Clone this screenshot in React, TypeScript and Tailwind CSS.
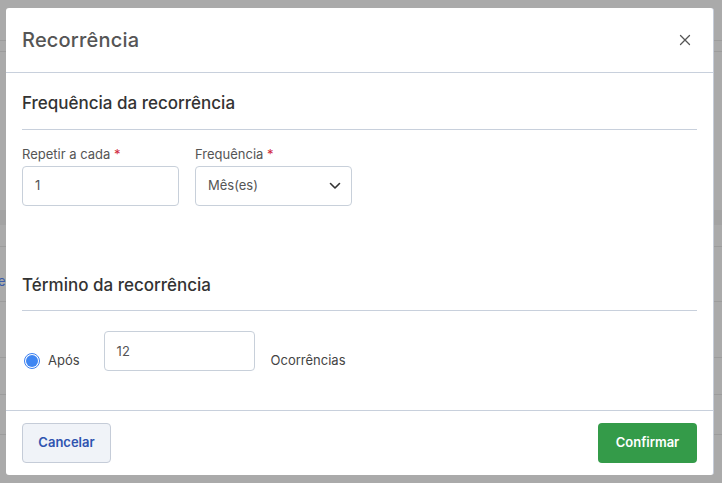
import React from "react";

function CloseIcon() {
  return (
    <svg width="12" height="12" viewBox="0 0 12 12" fill="none">
      <path d="M1.5 1.5L10.5 10.5M10.5 1.5L1.5 10.5" stroke="#555" strokeWidth="1.3" strokeLinecap="round" />
    </svg>
  );
}

function Chevron() {
  return (
    <svg width="12" height="8" viewBox="0 0 12 8" fill="none">
      <path d="M1.5 1.5L6 6L10.5 1.5" stroke="#333" strokeWidth="1.6" strokeLinecap="round" strokeLinejoin="round" />
    </svg>
  );
}

export default function App() {
  const font = { fontFamily: 'Inter, "Noto Sans", sans-serif' };
  return (
    <div className="relative w-[722px] h-[483px] overflow-hidden bg-[#aaaaaa]" style={font}>
      {/* background page (dimmed) */}
      <div className="flex flex-col">
        <div className="h-[41px] border-b border-[#9c9c9c]" />
        <div className="h-[11px] border-b border-[#9c9c9c]" />
        <div className="h-[158px]" />
        <div className="h-[15px] bg-[#a3a3a3]" />
        <div className="h-[22px] border-b border-[#9c9c9c]" />
        <div className="h-[54px] pt-[26px] text-[13px] leading-[16px] text-[#3b5ba8]">
          <span className="-ml-[2px]">e</span>
        </div>
        <div className="h-[56px] border-t border-[#9c9c9c]" />
        <div className="h-[37px] border-t border-[#9c9c9c]" />
        <div className="h-[40px] border-t border-[#9c9c9c]" />
        <div className="border-t border-[#9c9c9c]" />
      </div>

      {/* modal */}
      <div className="absolute left-[6px] top-[8px] w-[708px] h-[467px] bg-white rounded-[3px] border-r border-[#c5ccd8] flex flex-col">
        <div className="h-[65px] shrink-0 flex items-center justify-between pl-[16px] pr-[22px] border-b border-[#c8d0dc]">
          <span className="text-[20px] font-medium text-[#555555] tracking-[0.2px]">Recorrência</span>
          <CloseIcon />
        </div>

        <div className="flex-1 px-[16px] pt-[18px]">
          <div className="text-[17px] font-medium text-[#333333] leading-[24px]">Frequência da recorrência</div>
          <div className="mt-[14px] border-b border-[#c8d0dc]" />
          <div className="mt-[15px] flex gap-[16px]">
            <div className="flex flex-col w-[157px]">
              <label className="text-[13px] leading-[18px] text-[#555555]">
                Repetir a cada <span className="text-[#d0263a]">*</span>
              </label>
              <div className="mt-[3px] h-[40px] border border-[#c8d0da] rounded-[4px] flex items-center px-[12px] text-[13px] text-[#555555]">
                1
              </div>
            </div>
            <div className="flex flex-col w-[157px]">
              <label className="text-[13px] leading-[18px] text-[#555555]">
                Frequência <span className="text-[#d0263a]">*</span>
              </label>
              <div className="mt-[3px] h-[40px] border border-[#c8d0da] rounded-[4px] flex items-center justify-between pl-[12px] pr-[10px] text-[13px] text-[#555555]">
                <span>Mês(es)</span>
                <Chevron />
              </div>
            </div>
          </div>

          <div className="mt-[67px] text-[17px] font-medium text-[#333333] leading-[24px]">Término da recorrência</div>
          <div className="mt-[13px] border-b border-[#c8d0dc]" />
          <div className="mt-[20px] flex items-end">
            <div className="flex items-center h-[20px] pl-[2px]">
              <span className="w-[16px] h-[16px] rounded-full border border-[#3b7ff0] flex items-center justify-center">
                <span className="w-[12px] h-[12px] rounded-full bg-[#3f86f2]" />
              </span>
              <span className="ml-[8px] text-[13px] text-[#444444]">Após</span>
            </div>
            <div className="ml-[24px] w-[151px] h-[40px] border border-[#c8d0da] rounded-[4px] flex items-start pt-[10px] px-[12px] text-[13px] text-[#555555]">
              12
            </div>
            <div className="ml-[16px] h-[20px] flex items-center text-[13px] text-[#444444]">Ocorrências</div>
          </div>
        </div>

        <div className="h-[65px] shrink-0 border-t border-[#c8d0dc] flex items-center justify-between px-[16px]">
          <button className="h-[40px] w-[89px] rounded-[4px] border border-[#c5ccd8] bg-[#f0f3f8] text-[13px] font-semibold text-[#2f54b0]">
            Cancelar
          </button>
          <button className="h-[40px] w-[99px] rounded-[4px] bg-[#349b49] text-[13px] font-semibold text-white">
            Confirmar
          </button>
        </div>
      </div>
    </div>
  );
}
